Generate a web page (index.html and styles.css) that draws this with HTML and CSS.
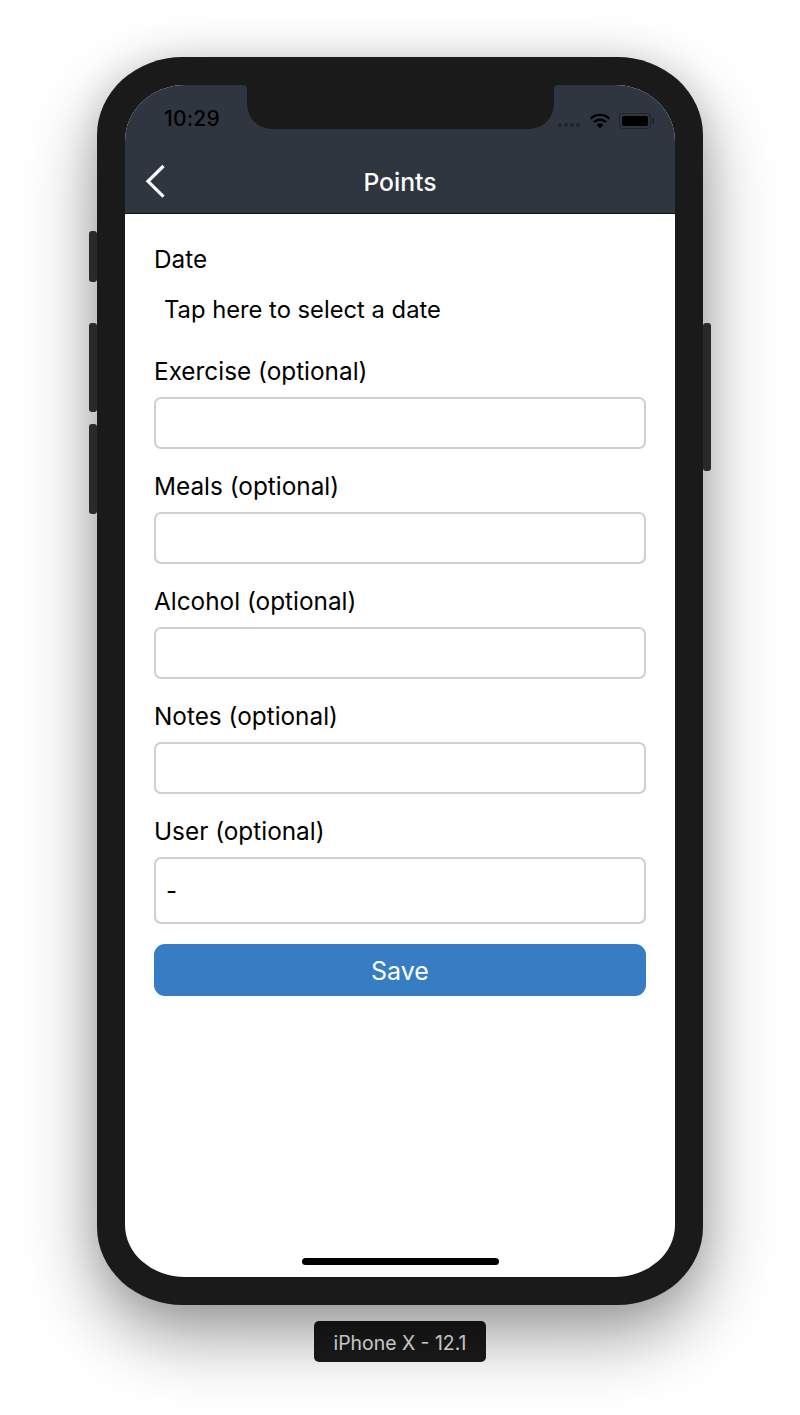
FILE: index.html
```html
<!DOCTYPE html>
<html lang="en">
<head>
<meta charset="utf-8">
<title>Points</title>
<link rel="stylesheet" href="styles.css">
</head>
<body>
<div class="stage">
  <div class="phone">
    <span class="side side-mute"></span>
    <span class="side side-up"></span>
    <span class="side side-down"></span>
    <span class="side side-power"></span>
    <div class="screen">
      <header class="topbar">
        <div class="status">
          <span class="clock">10:29</span>
          <div class="status-right">
            <span class="dots"><i></i><i></i><i></i><i></i></span>
            <svg class="wifi" width="22" height="16" viewBox="0 0 22 16"><path d="M11 15.5 7.6 11.8a5 5 0 0 1 6.8 0Z" fill="#000"/><path d="M4.9 9.2a8.8 8.8 0 0 1 12.2 0" fill="none" stroke="#000" stroke-width="2.3"/><path d="M1.6 5.6a13.6 13.6 0 0 1 18.8 0" fill="none" stroke="#000" stroke-width="2.3"/></svg>
            <span class="battery"><span class="battery-fill"></span></span>
          </div>
        </div>
        <div class="navbar">
          <svg class="back" width="24" height="36" viewBox="0 0 24 36"><path d="M21.5 3 6 18.3l15.5 15.3" fill="none" stroke="#fff" stroke-width="3.2"/></svg>
          <h1 class="title">Points</h1>
        </div>
      </header>
      <svg class="notch" width="323" height="44" viewBox="0 0 323 44"><path d="M0 0h323c-8 0-8 0-8 8v8c0 18-10 28-28 28H36C18 44 8 34 8 16V8C8 0 8 0 0 0Z" fill="#1a1a1a"/></svg>
      <main class="form">
        <div class="field field-date">
          <label class="label">Date</label>
          <div class="date-value">Tap here to select a date</div>
        </div>
        <div class="field"><label class="label">Exercise (optional)</label><div class="input"></div></div>
        <div class="field"><label class="label">Meals (optional)</label><div class="input"></div></div>
        <div class="field"><label class="label">Alcohol (optional)</label><div class="input"></div></div>
        <div class="field"><label class="label">Notes (optional)</label><div class="input"></div></div>
        <div class="field"><label class="label">User (optional)</label><div class="input input-select">-</div></div>
        <button class="save" type="button">Save</button>
      </main>
      <span class="home"></span>
    </div>
  </div>
  <div class="device-tag">iPhone X - 12.1</div>
</div>
</body>
</html>
```
FILE: styles.css
```css
* { box-sizing: border-box; }
html, body { margin: 0; height: 100%; background: #fff; overflow: hidden; }
body { font-family: Inter, "Noto Sans", "Liberation Sans", sans-serif; color: #000; }
.stage { display: flex; flex-direction: column; align-items: center; padding-top: 57px; height: 1415px; }
.phone {
  position: relative;
  width: 606px; height: 1248px;
  padding: 28px;
  background: #1a1a1a;
  border-radius: 86px / 78px;
  box-shadow: 0 30px 70px rgba(0,0,0,.4), 0 0 36px rgba(0,0,0,.1);
}
.side { position: absolute; background: #2a2a2a; border-radius: 3px; }
.side-mute { left: -8px; top: 174px; width: 8px; height: 51px; }
.side-up { left: -8px; top: 266px; width: 8px; height: 89px; }
.side-down { left: -8px; top: 367px; width: 8px; height: 90px; }
.side-power { right: -8px; top: 266px; width: 8px; height: 148px; }
.screen {
  position: relative;
  display: flex; flex-direction: column;
  width: 550px; height: 1192px;
  background: #fff;
  border-radius: 60px 60px 60px 60px / 56px 56px 52px 52px;
  overflow: hidden;
}
.topbar { height: 129px; flex: none; background: #2f3640; border-bottom: 1px solid #11161c; display: flex; flex-direction: column; }
.status { height: 65px; flex: none; display: flex; justify-content: space-between; align-items: flex-start; padding: 22px 21px 0 39px; }
.clock { font-size: 21px; font-weight: 500; line-height: 24px; color: #000; letter-spacing: .2px; }
.status-right { display: flex; align-items: center; gap: 8px; height: 20px; margin-top: 4px; }
.dots { display: flex; gap: 2px; margin-top: 8px; margin-right: 1px; }
.dots i { width: 4px; height: 4px; border-radius: 50%; background: #1f252d; }
.wifi { margin-top: 0; }
.battery { position: relative; width: 32px; height: 16px; border: 1px solid #1f252d; border-radius: 4px; padding: 2px; margin-right: 3px; }
.battery::after { content: ""; position: absolute; right: -4px; top: 4px; width: 2px; height: 6px; background: #1f252d; border-radius: 0 2px 2px 0; }
.battery-fill { display: block; height: 100%; background: #000; border-radius: 2px; }
.navbar { position: relative; flex: 1; display: flex; align-items: center; justify-content: center; }
.back { position: absolute; left: 17px; top: 13px; }
.title { margin: 0; font-size: 24.7px; font-weight: 500; line-height: 34px; color: #fff; }
.notch { position: absolute; left: 114px; top: 0; }
.form { display: flex; flex-direction: column; padding: 28px 29px 0; }
.field { display: flex; flex-direction: column; margin-bottom: 20.5px; }
.field-date { margin-bottom: 27px; }
.label { font-size: 24.35px; line-height: 34px; height: 34px; margin-bottom: 8.5px; }
.field-date .label { margin-bottom: 17px; }
.date-value { padding-left: 10px; font-size: 23.75px; line-height: 34px; }
.input { height: 52px; border: 2px solid #cfcfcf; border-radius: 7px; background: #fff; }
.input-select { height: 67px; padding-left: 10px; font-size: 24px; line-height: 64px; }
.save { height: 52px; border: 0; border-radius: 11px; background: #367dc4; color: #fff; font: inherit; font-size: 25px; line-height: 54px; padding: 0; }
.home { position: absolute; left: 177px; bottom: 12px; width: 197px; height: 7px; border-radius: 4px; background: #000; }
.device-tag { margin-top: 16px; width: 172px; height: 41px; background: #1a1a1a; border-radius: 5px; color: #ececec; font-size: 19.4px; line-height: 44px; text-align: center; }
```
